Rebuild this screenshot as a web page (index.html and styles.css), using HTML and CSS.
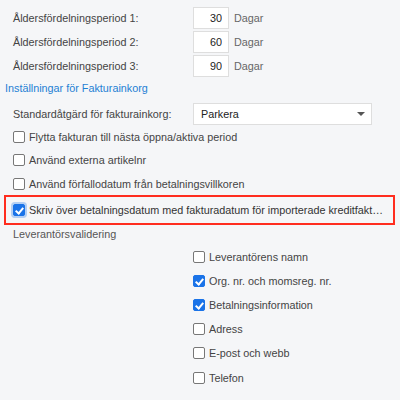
FILE: index.html
```html
<!DOCTYPE html>
<html lang="sv">
<head>
<meta charset="UTF-8" />
<title>Inställningar</title>
<link rel="stylesheet" href="styles.css">
</head>
<body>
    <div class="settings">
        <div class="row">
            <span class="label">Åldersfördelningsperiod 1:</span>
            <input class="num" type="text" value="30" />
            <span class="unit">Dagar</span>
        </div>
        <div class="row">
            <span class="label">Åldersfördelningsperiod 2:</span>
            <input class="num" type="text" value="60" />
            <span class="unit">Dagar</span>
        </div>
        <div class="row">
            <span class="label">Åldersfördelningsperiod 3:</span>
            <input class="num" type="text" value="90" />
            <span class="unit">Dagar</span>
        </div>

        <div class="section-title">Inställningar för Fakturainkorg</div>

        <div class="row row-select">
            <span class="label">Standardåtgärd för fakturainkorg:</span>
            <div class="select">
                <span>Parkera</span>
                <span class="caret"></span>
            </div>
        </div>

        <label class="check"><span class="box"></span>Flytta fakturan till nästa öppna/aktiva period</label>
        <label class="check"><span class="box"></span>Använd externa artikelnr</label>
        <label class="check"><span class="box"></span>Använd förfallodatum från betalningsvillkoren</label>

        <div class="highlight">
            <label class="check check-wide"><span class="box checked focus"></span><span class="ellipsis">Skriv över betalningsdatum med fakturadatum för importerade kreditfakturor</span></label>
        </div>

        <div class="subtitle">Leverantörsvalidering</div>

        <div class="validation">
            <label class="check"><span class="box"></span>Leverantörens namn</label>
            <label class="check"><span class="box checked"></span>Org. nr. och momsreg. nr.</label>
            <label class="check"><span class="box checked"></span>Betalningsinformation</label>
            <label class="check"><span class="box"></span>Adress</label>
            <label class="check"><span class="box"></span>E-post och webb</label>
            <label class="check"><span class="box"></span>Telefon</label>
        </div>
    </div>
</body>
</html>
```

FILE: styles.css
```css
body {
    margin: 0;
    background: #f5f6f8;
    font-family: "Liberation Sans", Arial, sans-serif;
    font-size: 10.8px;
    color: #444;
}

.settings {
    padding: 6px 0 0 0;
}

.row {
    display: flex;
    align-items: center;
    height: 24px;
}

.label {
    width: 180px;
    padding-left: 13px;
}

.num {
    box-sizing: border-box;
    width: 36px;
    height: 22px;
    border: 1px solid #dedede;
    background: #fff;
    font-family: inherit;
    font-size: 10.8px;
    color: #222;
    text-align: right;
    padding: 0 6px 0 0;
    margin: 0;
}

.unit {
    margin-left: 5px;
    color: #666;
}

.section-title {
    color: #1e7fd4;
    padding-left: 5px;
    height: 20px;
    line-height: 20px;
}

.row-select {
    margin-top: 5px;
    height: 22px;
}

.select {
    box-sizing: border-box;
    width: 179px;
    height: 22px;
    border: 1px solid #dedede;
    background: #fff;
    color: #222;
    display: flex;
    align-items: center;
    justify-content: space-between;
    padding: 0 6px 0 7px;
}

.caret {
    width: 0;
    height: 0;
    border-left: 4px solid transparent;
    border-right: 4px solid transparent;
    border-top: 4px solid #555;
}

.check {
    display: flex;
    align-items: center;
    height: 23.5px;
    padding-left: 13px;
    white-space: nowrap;
}

.box {
    box-sizing: border-box;
    flex: none;
    width: 12px;
    height: 12px;
    border: 1px solid #777;
    border-radius: 2px;
    background: #fff;
    margin-right: 4px;
    position: relative;
}

.box.checked {
    background: #1a73e8;
    border-color: #1a73e8;
}

.box.checked::after {
    content: "";
    position: absolute;
    left: 3px;
    top: 1px;
    width: 3px;
    height: 6px;
    border: solid #fff;
    border-width: 0 2px 2px 0;
    transform: rotate(40deg);
}

.box.focus {
    box-shadow: 0 0 0 2px rgba(26, 115, 232, 0.3);
}

.highlight {
    margin: -1px 5px 0 4px;
    border: 2px solid #ff2d1f;
    padding: 1px 0;
}

.check-wide {
    height: 24px;
    padding-left: 7px;
    color: #333;
}

.ellipsis {
    overflow: hidden;
    text-overflow: ellipsis;
    max-width: 357px;
}

.subtitle {
    padding-left: 13px;
    height: 18px;
    line-height: 18px;
    color: #555;
}

.validation {
    padding-left: 180px;
    padding-top: 2px;
}

.validation .check {
    height: 24.2px;
}
```
